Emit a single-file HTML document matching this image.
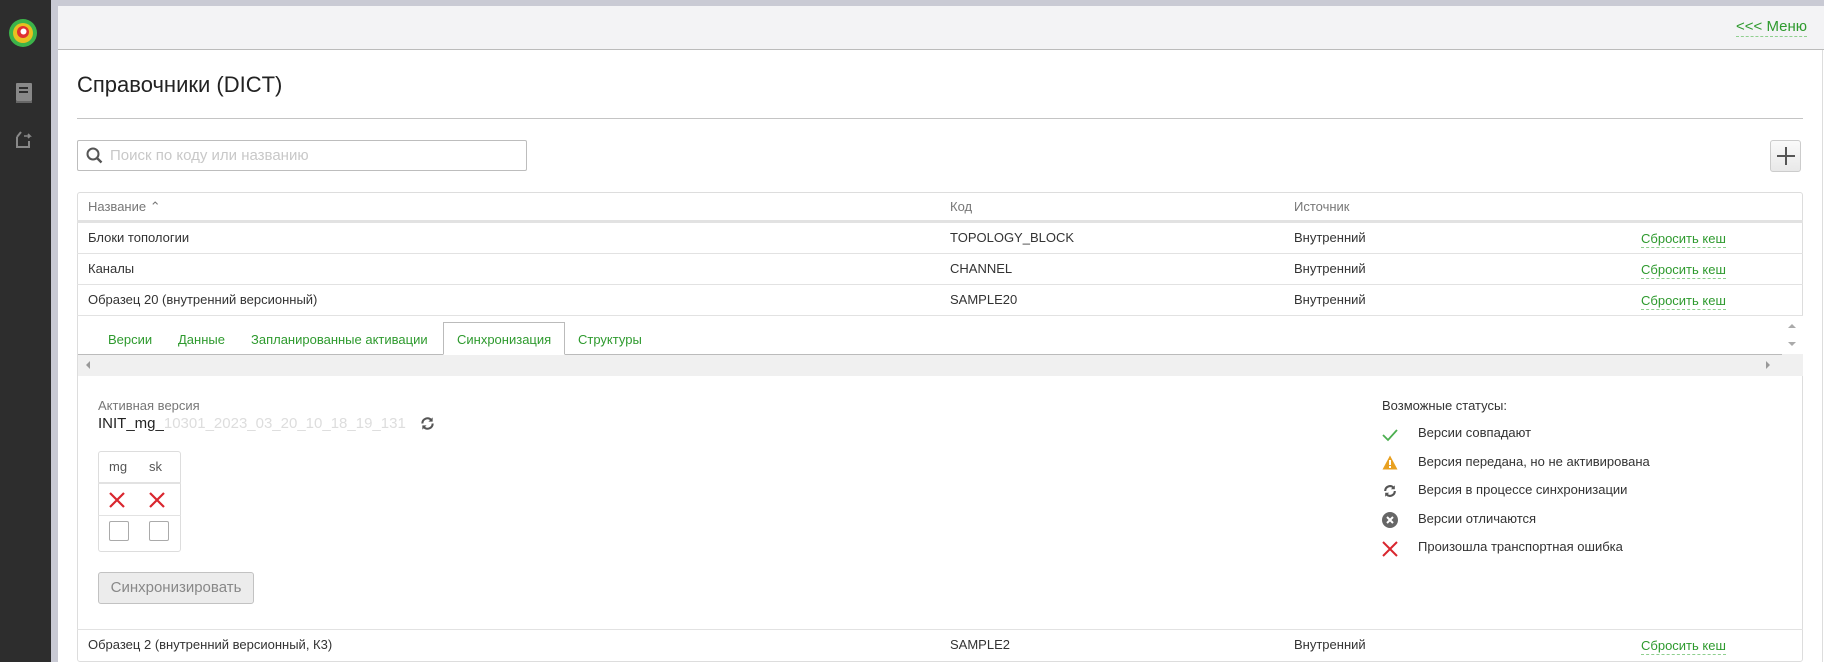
<!DOCTYPE html>
<html><head><meta charset="utf-8"><style>
*{box-sizing:border-box;margin:0;padding:0}
body{width:1824px;height:662px;overflow:hidden;background:#fff;font-family:"Liberation Sans","DejaVu Sans",sans-serif;font-size:13px;color:#333;position:relative}
.a{position:absolute}
.g{color:#2e9a2e}
.dash{border-bottom:1px dashed #8fcf8f}
.row{position:absolute;left:77px;width:1726px;height:31px;border-top:1px solid #e2e2e2;line-height:30px}
.row span{position:absolute}
</style></head><body>
<div class="a" style="left:0;top:0;width:1824px;height:6px;background:#c9cad4"></div>
<div class="a" style="left:0;top:0;width:51px;height:662px;background:#2d2d2d"></div>
<div class="a" style="left:51px;top:0;width:7px;height:662px;background:#c9cad4"></div>
<!-- logo -->
<svg class="a" style="left:8px;top:18px" width="30" height="30" viewBox="0 0 30 30"><circle cx="15" cy="15" r="14" fill="#3cb44a"/><circle cx="15" cy="15" r="10" fill="#e8c020"/><circle cx="15" cy="14" r="6" fill="#e03030"/><circle cx="15.5" cy="13.5" r="3" fill="#fff"/></svg>
<svg class="a" style="left:15px;top:82px" width="18" height="22" viewBox="0 0 18 22"><rect x="1" y="1" width="16" height="18" rx="1" fill="#888"/><rect x="4" y="5" width="9" height="2" fill="#2d2d2d"/><rect x="4" y="9" width="9" height="2" fill="#2d2d2d"/><rect x="1" y="19" width="16" height="2" fill="#666"/></svg>
<svg class="a" style="left:15px;top:129px" width="18" height="20" viewBox="0 0 18 20"><path d="M2 8v10h12v-6M2 8l4-5" stroke="#888" stroke-width="2" fill="none"/><path d="M9 7h6l-2-2M15 7l-2 2" stroke="#888" stroke-width="1.6" fill="none"/></svg>
<!-- header -->
<div class="a" style="left:58px;top:6px;width:1766px;height:44px;background:#f3f3f5;border-bottom:1px solid #bbb"></div>
<div class="a g" style="left:1736px;top:18px;font-size:15px;line-height:18px;border-bottom:1px dashed #8fcf8f">&lt;&lt;&lt; Меню</div>
<div class="a" style="left:1822px;top:50px;width:1px;height:612px;background:#ddd"></div>
<div class="a" style="left:77px;top:70px;font-size:22px;color:#222;line-height:30px">Справочники (DICT)</div>
<div class="a" style="left:77px;top:118px;width:1726px;height:1px;background:#c4c4c4"></div>
<div class="a" style="left:77px;top:140px;width:450px;height:31px;border:1px solid #bdbdbd;border-radius:2px"></div>
<svg class="a" style="left:86px;top:147px" width="17" height="17" viewBox="0 0 17 17"><circle cx="7" cy="7" r="5.5" stroke="#555" stroke-width="2" fill="none"/><path d="M11 11l4.5 4.5" stroke="#555" stroke-width="2.4"/></svg>
<div class="a" style="left:110px;top:146px;font-size:15px;color:#c8c8c8;line-height:19px">Поиск по коду или названию</div>
<div class="a" style="left:1770px;top:140px;width:31px;height:32px;border:1px solid #ccc;border-radius:3px;background:linear-gradient(#fafafa,#e8e8e8)"></div>
<div class="a" style="left:1777px;top:155px;width:18px;height:2px;background:#555"></div>
<div class="a" style="left:1785px;top:147px;width:2px;height:18px;background:#555"></div>
<!-- table -->
<div class="a" style="left:77px;top:192px;width:1726px;height:470px;border:1px solid #ddd;border-radius:3px"></div>
<div class="row" style="top:192px;border-top:none;height:30px;color:#777;border-bottom:2px solid #e2e2e2"><span style="left:11px">Название ⌃</span><span style="left:873px">Код</span><span style="left:1217px">Источник</span></div>
<div class="row" style="top:222px"><span style="left:11px">Блоки топологии</span><span style="left:873px">TOPOLOGY_BLOCK</span><span style="left:1217px">Внутренний</span><span class="g" style="left:1564px;line-height:16px;top:8px;border-bottom:1px dashed #8fcf8f">Сбросить кеш</span></div>
<div class="row" style="top:253px"><span style="left:11px">Каналы</span><span style="left:873px">CHANNEL</span><span style="left:1217px">Внутренний</span><span class="g" style="left:1564px;line-height:16px;top:8px;border-bottom:1px dashed #8fcf8f">Сбросить кеш</span></div>
<div class="row" style="top:284px"><span style="left:11px">Образец 20 (внутренний версионный)</span><span style="left:873px">SAMPLE20</span><span style="left:1217px">Внутренний</span><span class="g" style="left:1564px;line-height:16px;top:8px;border-bottom:1px dashed #8fcf8f">Сбросить кеш</span></div>
<div class="row" style="top:315px;height:314px"></div>
<!-- tabs -->
<div class="a" style="left:78px;top:354px;width:1704px;height:1px;background:#bbb"></div>
<div class="a" style="left:443px;top:322px;width:122px;height:33px;border:1px solid #bbb;border-bottom:1px solid #fff;background:#fff"></div>
<div class="a g" style="left:108px;top:332px;line-height:16px">Версии</div>
<div class="a g" style="left:178px;top:332px;line-height:16px">Данные</div>
<div class="a g" style="left:251px;top:332px;line-height:16px">Запланированные активации</div>
<div class="a g" style="left:457px;top:332px;line-height:16px">Синхронизация</div>
<div class="a g" style="left:578px;top:332px;line-height:16px">Структуры</div>
<div class="a" style="left:78px;top:355px;width:1725px;height:21px;background:#f0f0f0"></div>
<div class="a" style="left:1782px;top:316px;width:21px;height:60px;background:#f0f0f0"></div>
<div class="a" style="left:1782px;top:316px;width:21px;height:38px;background:#fff"></div>
<div class="a" style="left:86px;top:361px;border:4px solid transparent;border-right:4px solid #999;border-left:none"></div>
<div class="a" style="left:1766px;top:361px;border:4px solid transparent;border-left:4px solid #999;border-right:none"></div>
<div class="a" style="left:1788px;top:324px;border:4px solid transparent;border-bottom:4px solid #aaa;border-top:none"></div>
<div class="a" style="left:1788px;top:342px;border:4px solid transparent;border-top:4px solid #aaa;border-bottom:none"></div>
<!-- sync content -->
<div class="a" style="left:98px;top:398px;color:#777;line-height:16px">Активная версия</div>
<div class="a" style="left:98px;top:415px;font-size:15px;color:#222;line-height:18px">INIT_mg_<span style="color:#ddd">10301_2023_03_20_10_18_19_131</span></div>
<svg class="a" style="left:420px;top:416px" width="15" height="15" viewBox="0 0 16 16"><path d="M2.5 8a5.5 5.5 0 0 1 9.5-3.8M13.5 8a5.5 5.5 0 0 1-9.5 3.8" stroke="#555" stroke-width="2.2" fill="none"/><path d="M13.5 1.5v4.5h-4.5zM2.5 14.5v-4.5h4.5z" fill="#555"/></svg>
<div class="a" style="left:98px;top:451px;width:83px;height:101px;border:1px solid #ddd;border-radius:3px"></div>
<div class="a" style="left:98px;top:482px;width:83px;height:2px;background:#e2e2e2"></div>
<div class="a" style="left:98px;top:515px;width:83px;height:1px;background:#e2e2e2"></div>
<div class="a" style="left:109px;top:459px;color:#555;line-height:16px">mg</div>
<div class="a" style="left:149px;top:459px;color:#555;line-height:16px">sk</div>
<svg class="a" style="left:108px;top:491px" width="18" height="18" viewBox="0 0 18 18"><path d="M2 2l14 14M16 2L2 16" stroke="#d9262e" stroke-width="2.2"/></svg>
<svg class="a" style="left:148px;top:491px" width="18" height="18" viewBox="0 0 18 18"><path d="M2 2l14 14M16 2L2 16" stroke="#d9262e" stroke-width="2.2"/></svg>
<div class="a" style="left:109px;top:521px;width:20px;height:20px;border:1px solid #aaa;border-radius:2px"></div>
<div class="a" style="left:149px;top:521px;width:20px;height:20px;border:1px solid #aaa;border-radius:2px"></div>
<div class="a" style="left:98px;top:572px;width:156px;height:32px;border:1px solid #c2c2c2;border-radius:3px;background:#ececec;color:#888;font-size:15px;line-height:30px;text-align:center">Синхронизировать</div>
<!-- statuses -->
<div class="a" style="left:1382px;top:398px;color:#333;line-height:16px">Возможные статусы:</div>
<svg class="a" style="left:1382px;top:428px" width="16" height="14" viewBox="0 0 16 14"><path d="M1 7l5 5L15 2" stroke="#4caf50" stroke-width="1.8" fill="none"/></svg>
<div class="a" style="left:1418px;top:425px;line-height:16px">Версии совпадают</div>
<svg class="a" style="left:1382px;top:455px" width="16" height="15" viewBox="0 0 16 15"><path d="M8 0.5L15.5 14.5H0.5z" fill="#e8a020"/><rect x="7" y="5" width="2" height="5" fill="#fff"/><rect x="7" y="11" width="2" height="2" fill="#fff"/></svg>
<div class="a" style="left:1418px;top:454px;line-height:16px">Версия передана, но не активирована</div>
<svg class="a" style="left:1383px;top:484px" width="14" height="14" viewBox="0 0 16 16"><path d="M2.5 8a5.5 5.5 0 0 1 9.5-3.8M13.5 8a5.5 5.5 0 0 1-9.5 3.8" stroke="#555" stroke-width="2.4" fill="none"/><path d="M13.5 1.5v4.5h-4.5zM2.5 14.5v-4.5h4.5z" fill="#555"/></svg>
<div class="a" style="left:1418px;top:482px;line-height:16px">Версия в процессе синхронизации</div>
<svg class="a" style="left:1382px;top:512px" width="16" height="16" viewBox="0 0 16 16"><circle cx="8" cy="8" r="8" fill="#666"/><path d="M5 5l6 6M11 5l-6 6" stroke="#fff" stroke-width="2"/></svg>
<div class="a" style="left:1418px;top:511px;line-height:16px">Версии отличаются</div>
<svg class="a" style="left:1382px;top:541px" width="16" height="16" viewBox="0 0 16 16"><path d="M1 1l14 14M15 1L1 15" stroke="#d9262e" stroke-width="2"/></svg>
<div class="a" style="left:1418px;top:539px;line-height:16px">Произошла транспортная ошибка</div>
<div class="row" style="top:629px"><span style="left:11px">Образец 2 (внутренний версионный, К3)</span><span style="left:873px">SAMPLE2</span><span style="left:1217px">Внутренний</span><span class="g" style="left:1564px;line-height:16px;top:8px;border-bottom:1px dashed #8fcf8f">Сбросить кеш</span></div>
</body></html>
